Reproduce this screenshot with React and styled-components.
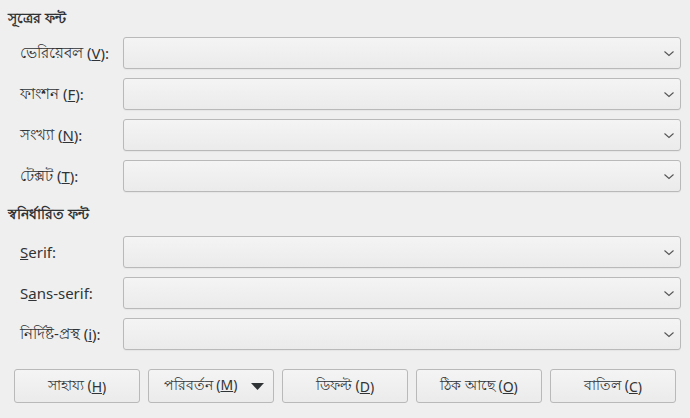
import React from 'react';
import styled, { createGlobalStyle } from 'styled-components';

const GlobalStyle = createGlobalStyle`
  html, body {
    margin: 0;
    padding: 0;
    background: #efefef;
  }
  body {
    font-family: "Noto Sans", "Open Sans", "DejaVu Sans", sans-serif;
    font-size: 14px;
    color: #2f3336;
  }
`;

const Dialog = styled.div`
  width: 690px;
  height: 418px;
  box-sizing: border-box;
  padding: 8px 9px 0 8px;
  display: flex;
  flex-direction: column;
`;

const SectionTitle = styled.div`
  font-weight: bold;
  font-size: 14px;
  line-height: 20px;
  height: 20px;
  margin-top: ${(p) => (p.$first ? '0' : '12px')};
  margin-bottom: 12px;
  &:first-child {
    margin-bottom: 9px;
  }
`;

const FieldGrid = styled.div`
  display: grid;
  grid-template-columns: 103px 1fr;
  row-gap: 9px;
  padding-left: 12px;
`;

const Label = styled.label`
  display: flex;
  align-items: center;
  height: 32px;
  font-size: 15px;
  white-space: nowrap;
`;

const Combo = styled.div`
  height: 32px;
  box-sizing: border-box;
  border: 1px solid #b9b9b9;
  border-radius: 3px;
  background: linear-gradient(#f4f4f4, #ebebeb);
  display: flex;
  align-items: center;
  justify-content: flex-end;
  padding-right: 5px;
  box-shadow: 0 1px 1px rgba(0, 0, 0, 0.04);
`;

const ButtonRow = styled.div`
  display: flex;
  gap: 8px;
  padding: 0 5px 0 6px;
  margin-top: 19px;
`;

const Button = styled.button`
  width: 126px;
  height: 34px;
  box-sizing: border-box;
  border: 1px solid #b9b9b9;
  border-radius: 3px;
  background: linear-gradient(#f4f4f4, #ebebeb);
  font-family: inherit;
  font-size: 14px;
  color: #2f3336;
  display: flex;
  align-items: center;
  justify-content: center;
  gap: ${(p) => (p.$menu ? '14px' : '0')};
  padding: 0 ${(p) => (p.$menu ? '0 0 6px' : '0')};
  cursor: pointer;
`;

const Chevron = () => (
  <svg width="12" height="7" viewBox="0 0 12 7">
    <path d="M1.5 1.5 L6 5.5 L10.5 1.5" fill="none" stroke="#555" strokeWidth="1.1" />
  </svg>
);

const Caret = () => (
  <svg width="13" height="7" viewBox="0 0 13 7">
    <path d="M0 0 H13 L6.5 7 Z" fill="#2f3336" />
  </svg>
);

const FontField = ({ children }) => (
  <>
    <Label>{children}</Label>
    <Combo>
      <Chevron />
    </Combo>
  </>
);

export default function App() {
  return (
    <>
      <GlobalStyle />
      <Dialog>
        <SectionTitle $first>সূত্রের ফন্ট</SectionTitle>
        <FieldGrid>
          <FontField>ভেরিয়েবল (<u>V</u>):</FontField>
          <FontField>ফাংশন (<u>F</u>):</FontField>
          <FontField>সংখ্যা (<u>N</u>):</FontField>
          <FontField>টেক্সট (<u>T</u>):</FontField>
        </FieldGrid>
        <SectionTitle>স্বনির্ধারিত ফন্ট</SectionTitle>
        <FieldGrid>
          <FontField><u>S</u>erif:</FontField>
          <FontField>S<u>a</u>ns-serif:</FontField>
          <FontField>নির্দিষ্ট-প্রস্থ (<u>i</u>):</FontField>
        </FieldGrid>
        <ButtonRow>
          <Button>সাহায্য (<u>H</u>)</Button>
          <Button $menu>
            <span>পরিবর্তন (<u>M</u>)</span>
            <Caret />
          </Button>
          <Button>ডিফল্ট (<u>D</u>)</Button>
          <Button>ঠিক আছে (<u>O</u>)</Button>
          <Button>বাতিল (<u>C</u>)</Button>
        </ButtonRow>
      </Dialog>
    </>
  );
}
